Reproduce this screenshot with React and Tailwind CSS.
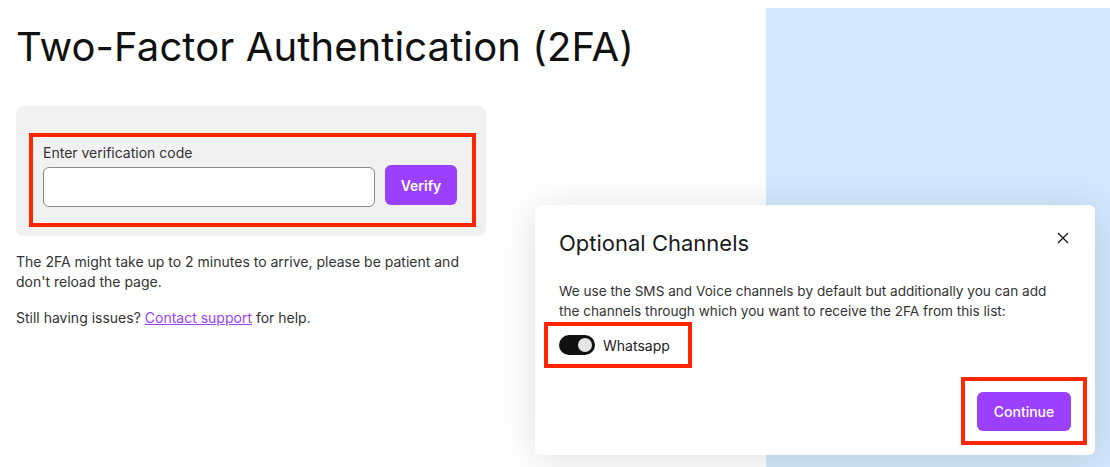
import React from "react";

export default function App() {
  return (
    <div className="relative w-[1110px] h-[467px] overflow-hidden bg-white font-['Inter',sans-serif] text-[#1a1a1a]">
      <div className="flex h-full">
        <div className="flex-1 pl-4 pt-[23px]">
          <h1 className="text-[40px] leading-[48px] font-normal tracking-[0.1px] text-[#111]">
            Two-Factor Authentication (2FA)
          </h1>
          <div className="mt-[35px] w-[470px] h-[130px] rounded-lg bg-[#f1f1f1] pt-[27px] pl-[13px]">
            <div className="w-[447px] h-[94px] border-4 border-[#ff2600] pl-[10px] pt-[6px]">
              <div className="text-[14px] leading-5 text-[#333]">Enter verification code</div>
              <div className="mt-[2px] flex items-start gap-[10px]">
                <div className="mt-[2px] w-[332px] h-10 rounded-md border border-[#8a8a8a] bg-white" />
                <button className="w-[72px] h-10 rounded-md bg-[#9b40ff] text-white text-[14px] font-semibold">
                  Verify
                </button>
              </div>
            </div>
          </div>
          <p className="mt-4 w-[460px] text-[14px] leading-5 text-[#333]">
            The 2FA might take up to 2 minutes to arrive, please be patient and don't reload the page.
          </p>
          <p className="mt-4 text-[14px] leading-5 text-[#333]">
            Still having issues?{" "}
            <a className="text-[#9b40ff] underline">Contact support</a> for help.
          </p>
        </div>
        <div className="w-[344px] mt-2 bg-[#d2e8fc]" />
      </div>

      <div className="absolute left-[535px] top-[205px] w-[560px] h-[250px] rounded-md bg-white shadow-[0_4px_40px_rgba(0,0,0,0.13)] pt-6 pl-6 pr-[26px]">
        <div className="flex items-start justify-between">
          <h2 className="text-[22px] leading-7 font-normal text-[#1a1a1a]">Optional Channels</h2>
          <svg width="12" height="12" viewBox="0 0 12 12" className="mt-[3px]" fill="none" stroke="#1a1a1a" strokeWidth="1.4">
            <path d="M1 1L11 11M11 1L1 11" />
          </svg>
        </div>
        <p className="mt-[24px] w-[508px] text-[13.6px] leading-5 text-[#333]">
          We use the SMS and Voice channels by default but additionally you can add the channels through which you want to receive the 2FA from this list:
        </p>
        <div className="-ml-[15px] mt-[1px] w-[148px] h-[46px] border-4 border-[#ff2600] pl-[11px] flex items-center gap-2">
          <div className="w-9 h-5 rounded-full bg-[#111] flex items-center justify-end pr-[3px]">
            <div className="w-[14px] h-[14px] rounded-full bg-[#e5e5e5]" />
          </div>
          <span className="text-[14px] text-[#222]">Whatsapp</span>
        </div>
        <div className="flex justify-end -mr-[18px] mt-[9px]">
          <div className="w-[126px] h-[68px] border-4 border-[#ff2600] flex items-center justify-center">
            <button className="w-[94px] h-[39px] rounded-md bg-[#9b40ff] text-white text-[14px] font-medium">
              Continue
            </button>
          </div>
        </div>
      </div>
    </div>
  );
}
